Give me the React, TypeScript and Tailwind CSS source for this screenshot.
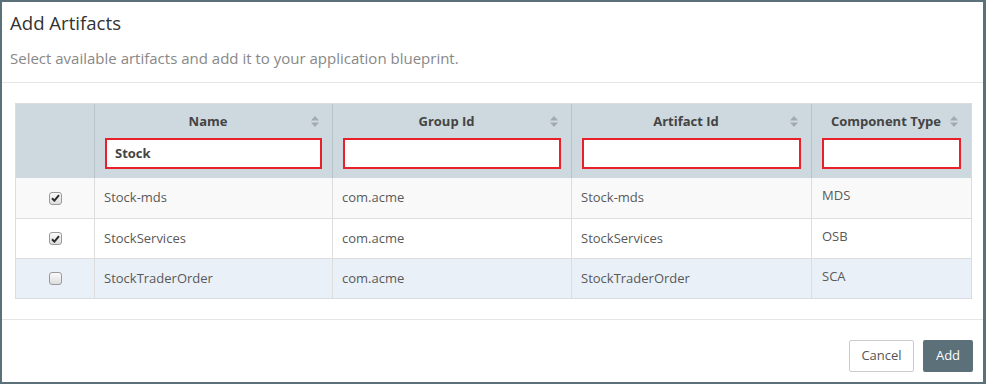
import React from 'react'

type Row = {
  name: string
  groupId: string
  artifactId: string
  type: string
  checked: boolean
  bg: string
}

const rows: Row[] = [
  { name: 'Stock-mds', groupId: 'com.acme', artifactId: 'Stock-mds', type: 'MDS', checked: true, bg: 'bg-[#f9f9f9]' },
  { name: 'StockServices', groupId: 'com.acme', artifactId: 'StockServices', type: 'OSB', checked: true, bg: 'bg-white' },
  { name: 'StockTraderOrder', groupId: 'com.acme', artifactId: 'StockTraderOrder', type: 'SCA', checked: false, bg: 'bg-[#e9f0f7]' },
]

function SortIcon() {
  return (
    <svg width="8" height="11" viewBox="0 0 8 11" className="shrink-0">
      <path d="M4 0 L8 4.5 L0 4.5 Z" fill="#a3a9ad" />
      <path d="M0 6.5 L8 6.5 L4 11 Z" fill="#a3a9ad" />
    </svg>
  )
}

function Checkbox({ checked }: { checked: boolean }) {
  return (
    <div className="w-[13px] h-[13px] rounded-[3px] border border-[#9a9a9a] bg-gradient-to-b from-[#fafafa] to-[#dedede] flex items-center justify-center">
      {checked && (
        <svg width="9" height="8" viewBox="0 0 9 8">
          <path d="M1 4.2 L3.4 6.6 L8 1.2" stroke="#2b2b2b" strokeWidth="2" fill="none" />
        </svg>
      )}
    </div>
  )
}

function HeaderCell({ title, value, last }: { title: string; value?: string; last?: boolean }) {
  return (
    <div className={`h-full bg-[#cdd9de] flex flex-col px-[10px] pt-[8px] pb-[9px] ${last ? '' : 'border-r border-[#b7c4ca]'}`}>
      <div className="relative flex items-center justify-center h-[20px] pr-[11px]">
        <span className="text-[13px] font-bold text-[#444]">{title}</span>
        <span className="absolute right-[3px] top-[4px]">
          <SortIcon />
        </span>
      </div>
      <div className="mt-[6px] h-[31px] border-2 border-[#e8202a] bg-white flex items-center px-[8px]">
        <span className="text-[13px] font-bold text-[#444]">{value}</span>
      </div>
    </div>
  )
}

export default function App() {
  return (
    <div
      className="w-[986px] h-[384px] bg-white border-l-2 border-t-2 border-r-[3px] border-b-2 border-[#5b7079] flex flex-col text-[#595959]"
      style={{ fontFamily: '"Open Sans", "Liberation Sans", sans-serif' }}
    >
      {/* Header */}
      <div className="px-[8px] pt-[9px] pb-[14px] border-b border-[#e5e5e5]">
        <h1 className="text-[18.6px] leading-[24px] text-[#333]">Add Artifacts</h1>
        <p className="mt-[13px] text-[15px] leading-[20px] text-[#888]">
          Select available artifacts and add it to your application blueprint.
        </p>
      </div>

      {/* Body */}
      <div className="px-[13px] pt-[20px] pb-[20px] border-b border-[#e5e5e5]">
        <div className="w-[957px] border border-[#d9dde0] grid grid-cols-[79px_238px_239px_240px_159px] text-[13px]">
          <div className="bg-[#cdd9de] border-r border-[#b7c4ca]" />
          <HeaderCell title="Name" value="Stock" />
          <HeaderCell title="Group Id" />
          <HeaderCell title="Artifact Id" />
          <HeaderCell title="Component Type" last />

          {rows.map((r, i) => (
            <React.Fragment key={r.name}>
              <div className={`${r.bg} h-[40px] flex items-center justify-center border-r border-[#ddd] ${i > 0 ? 'border-t' : ''} border-t-[#ddd]`}>
                <Checkbox checked={r.checked} />
              </div>
              <div className={`${r.bg} h-[40px] flex items-center px-[9px] border-r border-[#ddd] ${i > 0 ? 'border-t' : ''} border-t-[#ddd]`}>
                {r.name}
              </div>
              <div className={`${r.bg} h-[40px] flex items-center px-[9px] border-r border-[#ddd] ${i > 0 ? 'border-t' : ''} border-t-[#ddd]`}>
                {r.groupId}
              </div>
              <div className={`${r.bg} h-[40px] flex items-center px-[9px] border-r border-[#ddd] ${i > 0 ? 'border-t' : ''} border-t-[#ddd]`}>
                {r.artifactId}
              </div>
              <div className={`${r.bg} h-[40px] flex items-center px-[10px] pb-[4px] ${i > 0 ? 'border-t' : ''} border-t-[#ddd]`}>
                {r.type}
              </div>
            </React.Fragment>
          ))}
        </div>
      </div>

      {/* Footer */}
      <div className="flex justify-end gap-[9px] pr-[10px] pt-[20px]">
        <button className="h-[32px] w-[65px] border border-[#ccc] rounded-[2px] bg-white text-[13px] text-[#555]">
          Cancel
        </button>
        <button className="h-[32px] w-[50px] rounded-[2px] bg-[#5b7079] text-[13px] text-white">
          Add
        </button>
      </div>
    </div>
  )
}
